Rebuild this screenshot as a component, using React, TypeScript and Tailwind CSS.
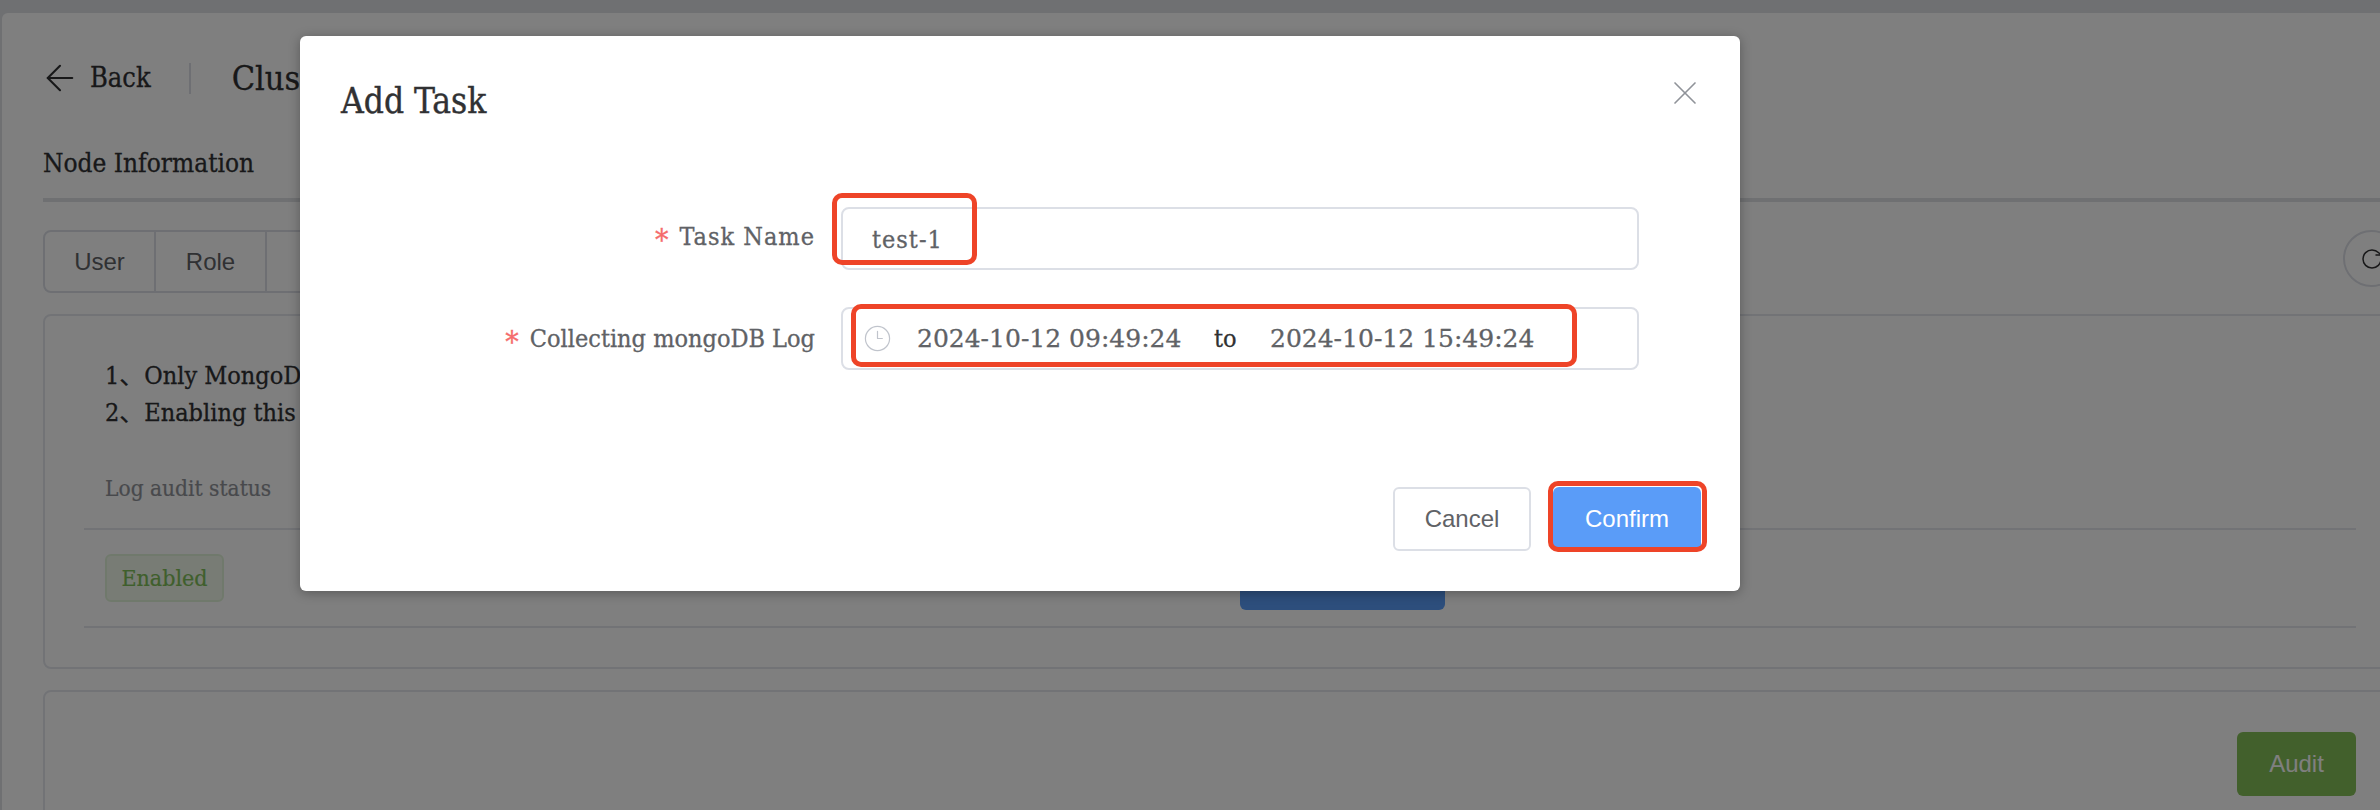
import { ArrowLeft, Clock3, RotateCw, X } from 'lucide-react'

const serif = "font-['DejaVu_Serif','Noto_Sans_CJK_SC',serif] [font-stretch:condensed]"
const sans = "font-['Liberation_Sans',sans-serif] [font-stretch:normal]"
const star = 'mr-[11px] align-[-5px] text-[30px] leading-none text-[#f56c6c]'

export default function App() {
  return (
    <div className={`relative h-[810px] w-[2380px] overflow-hidden bg-[#dfe1e5] ${serif}`}>
      <div className="h-[13px]" />
      <main className="ml-[2px] h-[797px] rounded-tl-md bg-white pl-[41px]">
        <header className="flex h-[130px] items-center">
          <div className="flex items-center">
            <ArrowLeft size={42} strokeWidth={1.2} className="-ml-[4px] text-[#303133]" />
            <span className="ml-[9px] text-[27px] text-[#303133] [-webkit-text-stroke:0.3px]">Back</span>
          </div>
          <span className="ml-[38px] h-[31px] w-[2px] bg-[#dcdfe6]" />
          <h1 className="ml-[41px] text-[34px] text-[#303133] [-webkit-text-stroke:0.3px]">Cluster</h1>
        </header>

        <div className="flex h-[59px] items-center border-b-4 border-[#dfe1e5] pb-[15px]">
          <h2 className="text-[26px] text-[#303133] [-webkit-text-stroke:0.3px]">Node Information</h2>
        </div>

        <div className="mt-[28px] flex h-[63px] justify-between">
          <div className={`flex h-[63px] rounded-lg border-2 border-[#dcdfe6] text-[24px] text-[#606266] ${sans}`}>
            <span className="flex w-[111px] items-center justify-center border-r-2 border-[#dcdfe6]">User</span>
            <span className="flex w-[111px] items-center justify-center border-r-2 border-[#dcdfe6]">Role</span>
            <span className="flex w-[140px] items-center justify-center">Audit</span>
          </div>
          <button className="-mr-[20px] flex h-[57px] w-[57px] items-center justify-center rounded-full border-2 border-[#dcdfe6] text-[#303133]">
            <RotateCw size={24} strokeWidth={1.5} />
          </button>
        </div>

        <section className="mt-[21px] -mr-[20px] h-[355px] rounded-lg border-2 border-[#e4e7ed] pl-[39px] pr-[42px]">
          <div className="ml-[21px] pt-[41px] text-[25px] leading-[37px] text-[#303133] [-webkit-text-stroke:0.3px]">
            <p>1、Only MongoDB clusters support log auditing.</p>
            <p>2、Enabling this feature may affect performance.</p>
          </div>
          <div className="mt-[18px] flex h-[81px] items-center border-b-2 border-[#e4e7ed] pl-[21px] pt-[1px] text-[22.5px] text-[#909399] [-webkit-text-stroke:0.2px]">
            Log audit status
          </div>
          <div className="flex h-[98px] items-center border-b-2 border-[#e4e7ed] pl-[21px]">
            <span className="flex h-[48px] w-[119px] items-center justify-center rounded-md border-2 border-[#e1f3d8] bg-[#f0f9eb] text-[23px] text-[#7fbf58] [-webkit-text-stroke:0.2px]">
              Enabled
            </span>
            <span className="ml-[1016px] h-[64px] w-[205px] rounded-md bg-[#5a9cf8]" />
          </div>
        </section>

        <section className="mt-[21px] -mr-[20px] flex h-[200px] items-start justify-end rounded-lg border-2 border-[#e4e7ed] pr-[42px] pt-[40px]">
          <button className={`h-[64px] w-[119px] rounded-md bg-[#85c058] text-[24px] text-white ${sans}`}>Audit</button>
        </section>
      </main>

      <div className="absolute inset-0 bg-black/50" />

      <div className="absolute left-[300px] top-[36px] h-[555px] w-[1440px] rounded-md bg-white shadow-[0_2px_12px_rgba(0,0,0,0.3)]">
        <div className="relative flex h-[130px] items-start pl-[41px] pt-[38px]">
          <h3 className="text-[35px] leading-[54px] text-[#303133] [-webkit-text-stroke:0.4px]">Add Task</h3>
          <X size={40} strokeWidth={1} className="absolute right-[35px] top-[37px] text-[#909399]" />
        </div>

        <div className="mt-[41px] flex h-[63px] items-center">
          <label className="w-[515px] pb-[3px] text-right text-[25px] text-[#606266] [-webkit-text-stroke:0.3px]">
            <span className={star}>*</span>
            <span className="tracking-[1px]">Task Name</span>
          </label>
          <div className="ml-[26px] flex h-[63px] w-[798px] items-center rounded-lg border-2 border-[#dcdfe6] pl-[29px] pt-[3px] text-[25px] tracking-[1px] text-[#606266] [-webkit-text-stroke:0.3px]">
            test-1
          </div>
        </div>

        <div className="mt-[37px] flex h-[63px] items-center">
          <label className="w-[515px] text-right text-[25px] text-[#606266] [-webkit-text-stroke:0.3px]">
            <span className={star}>*</span>Collecting mongoDB Log
          </label>
          <div className="ml-[26px] flex h-[63px] w-[798px] items-center rounded-lg border-2 border-[#dcdfe6] pl-[20px] text-[25px] text-[#606266] [-webkit-text-stroke:0.3px]">
            <Clock3 size={29} strokeWidth={1} className="shrink-0 text-[#c0c4cc]" />
            <span className="ml-[25px] w-[263px] whitespace-nowrap text-center [font-stretch:normal]">2024-10-12 09:49:24</span>
            <span className="ml-[34px] w-[21px] text-center text-[#303133]">to</span>
            <span className="ml-[35px] w-[262px] whitespace-nowrap text-center [font-stretch:normal]">2024-10-12 15:49:24</span>
          </div>
        </div>

        <div className={`mt-[117px] flex justify-end gap-[22px] pr-[39px] text-[24px] ${sans}`}>
          <button className="h-[64px] w-[138px] rounded-md border-2 border-[#dcdfe6] text-[#606266]">Cancel</button>
          <button className="h-[64px] w-[148px] rounded-md bg-[#5a9cf8] text-white">Confirm</button>
        </div>

        {/* red annotation boxes */}
        <div className="absolute left-[532px] top-[157px] h-[72px] w-[145px] rounded-[10px] border-[5px] border-[#ee4428]" />
        <div className="absolute left-[551px] top-[268px] h-[63px] w-[726px] rounded-[10px] border-[5px] border-[#ee4428]" />
        <div className="absolute left-[1248px] top-[445px] h-[71px] w-[159px] rounded-[10px] border-[5px] border-[#ee4428]" />
      </div>
    </div>
  )
}
